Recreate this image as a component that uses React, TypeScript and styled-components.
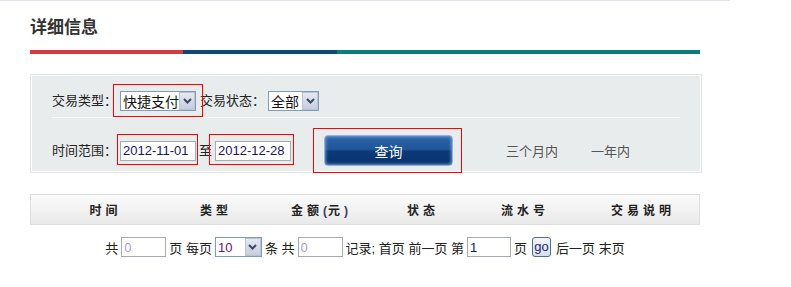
import React from "react";
import styled, { createGlobalStyle } from "styled-components";

const GlobalStyle = createGlobalStyle`
  html, body { margin: 0; padding: 0; background: #fff; }
  body {
    font-family: "Liberation Sans", "Noto Sans CJK SC", sans-serif;
    font-size: 13px;
    color: #222;
  }
  * { box-sizing: border-box; }
`;

const Page = styled.div`
  width: 791px;
  height: 287px;
  overflow: hidden;
`;

const TopRule = styled.div`
  width: 730px;
  height: 1px;
  background: #dfe4ea;
`;

const Content = styled.div`
  margin-left: 30px;
  width: 672px;
`;

const Title = styled.h2`
  margin: 0;
  padding-top: 18px;
  height: 49px;
  font-size: 17px;
  line-height: 17px;
  font-weight: bold;
  color: #333;
`;

const ColorBar = styled.div`
  display: flex;
  width: 670px;
  height: 4px;
`;

const Segment = styled.div<{ $color: string; $w: number }>`
  width: ${(p) => p.$w}px;
  background: ${(p) => p.$color};
`;

const Panel = styled.div`
  margin-top: 20px;
  width: 672px;
  border: 1px solid #e1e3e4;
  padding: 1px;
  background: #fff;
`;

const PanelInner = styled.div`
  background: #e9eced;
  padding: 0 20px;
`;

const RowOne = styled.div`
  display: flex;
  align-items: center;
  padding: 15px 0 6px;
  border-bottom: 1px solid #fff;
`;

const RowTwo = styled.div`
  display: flex;
  align-items: center;
  padding: 17px 0 5px;
`;

const Label = styled.span<{ $ml?: number; $mr?: number }>`
  font-size: 13px;
  line-height: 20px;
  color: #222;
  white-space: nowrap;
  margin-left: ${(p) => p.$ml ?? 0}px;
  margin-right: ${(p) => p.$mr ?? 0}px;
`;

const QuickLink = styled.span<{ $ml: number }>`
  font-size: 13px;
  color: #555;
  margin-left: ${(p) => p.$ml}px;
  white-space: nowrap;
`;

const Marked = styled.span<{ $t: number; $r: number; $b: number; $l: number; $ml?: number }>`
  position: relative;
  display: inline-flex;
  margin-left: ${(p) => p.$ml ?? 0}px;
  &::after {
    content: "";
    position: absolute;
    top: -${(p) => p.$t}px;
    right: -${(p) => p.$r}px;
    bottom: -${(p) => p.$b}px;
    left: -${(p) => p.$l}px;
    border: 1px solid #ff0000;
    pointer-events: none;
  }
`;

const FakeSelect = styled.div<{ $w: number; $fs: number; $color?: string; $h?: number }>`
  display: inline-flex;
  align-items: stretch;
  width: ${(p) => p.$w}px;
  height: ${(p) => p.$h ?? 20}px;
  border: 1px solid #7f9db9;
  background: #fff;
  font-size: ${(p) => p.$fs}px;
  color: ${(p) => p.$color ?? "#111"};
`;

const SelectText = styled.span`
  flex: 1;
  padding-left: 2px;
  display: flex;
  align-items: center;
  white-space: nowrap;
  overflow: hidden;
`;

const SelectArrow = styled.span`
  width: 16px;
  border: 1px solid #b9c2d6;
  background: linear-gradient(#e4e8f1, #c7cddd);
  display: flex;
  align-items: center;
  justify-content: center;
`;

const TextInput = styled.input<{ $w: number; $h?: number; $color?: string }>`
  width: ${(p) => p.$w}px;
  height: ${(p) => p.$h ?? 20}px;
  border: 1px solid #a5acb2;
  padding: 0 2px;
  margin: 0;
  font-family: "Liberation Sans", "Noto Sans CJK SC", sans-serif;
  font-size: 13px;
  color: ${(p) => p.$color ?? "#1c1466"};
  background: #fff;
  outline: none;
`;

const QueryButton = styled.button`
  width: 129px;
  height: 31px;
  padding: 0;
  border: 1px solid #8fb1de;
  border-radius: 4px;
  background: linear-gradient(
    #2c63aa 0%,
    #1f5699 46%,
    #0c3a77 52%,
    #08336e 100%
  );
  box-shadow: inset 0 0 3px 1px rgba(140, 175, 225, 0.75);
  color: #fff;
  font-family: "Liberation Sans", "Noto Sans CJK SC", sans-serif;
  font-size: 14px;
  cursor: pointer;
`;

const TableHead = styled.div`
  margin-top: 21px;
  width: 670px;
  height: 31px;
  border: 1px solid #dedede;
  background: linear-gradient(#fbfbfb, #e9e9e9);
  display: grid;
  grid-template-columns: 145px 76px 132px 74px 130px 106px 1fr;
  align-items: center;
`;

const HeadCell = styled.div`
  text-align: center;
  font-size: 12px;
  font-weight: bold;
  letter-spacing: 4px;
  padding-left: 4px;
  color: #222;
  white-space: nowrap;
`;

const Paren = styled.span`
  letter-spacing: 1px;
  color: #3a3a70;
`;

const Pager = styled.div`
  margin-top: 12px;
  width: 670px;
  display: flex;
  justify-content: center;
  align-items: center;
  height: 20px;
  font-size: 13px;
  color: #222;
`;

const PagerText = styled.span`
  white-space: pre;
  margin: 0 3px;
`;

const GoButton = styled.button`
  width: 19px;
  height: 20px;
  padding: 0;
  margin: 0 2px;
  border: 1px solid #4f6d99;
  border-radius: 3px;
  background: linear-gradient(#f2f4f8, #d9dfe8);
  font-family: "Liberation Sans", sans-serif;
  font-size: 13px;
  color: #1b2a7a;
  line-height: 16px;
`;

const Chevron = () => (
  <svg width="9" height="6" viewBox="0 0 9 6">
    <path d="M1 1 L4.5 4.5 L8 1" fill="none" stroke="#3d4866" strokeWidth="2" />
  </svg>
);

const Select = ({ w, fs, text, color, h }: { w: number; fs: number; text: string; color?: string; h?: number }) => (
  <FakeSelect $w={w} $fs={fs} $color={color} $h={h}>
    <SelectText>{text}</SelectText>
    <SelectArrow>
      <Chevron />
    </SelectArrow>
  </FakeSelect>
);

export default function App() {
  return (
    <Page>
      <GlobalStyle />
      <TopRule />
      <Content>
        <Title>详细信息</Title>
        <ColorBar>
          <Segment $color="#da393f" $w={153} />
          <Segment $color="#0b497d" $w={154} />
          <Segment $color="#097c7d" $w={363} />
        </ColorBar>

        <Panel>
          <PanelInner>
            <RowOne>
              <Label $mr={3}>交易类型：</Label>
              <Marked $t={7} $r={7} $b={6} $l={7}>
                <Select w={76} fs={14} text="快捷支付" />
              </Marked>
              <Label $ml={4} $mr={3}>交易状态：</Label>
              <Select w={51} fs={14} text="全部" />
            </RowOne>
            <RowTwo>
              <Label $mr={3}>时间范围：</Label>
              <Marked $t={7} $r={2} $b={4} $l={3}>
                <TextInput $w={76} defaultValue="2012-11-01" readOnly />
              </Marked>
              <Label $ml={3} $mr={3}>至</Label>
              <Marked $t={7} $r={3} $b={4} $l={6}>
                <TextInput $w={76} defaultValue="2012-12-28" readOnly />
              </Marked>
              <Marked $t={7} $r={9} $b={7} $l={11} $ml={33}>
                <QueryButton>查询</QueryButton>
              </Marked>
              <QuickLink $ml={53}>三个月内</QuickLink>
              <QuickLink $ml={33}>一年内</QuickLink>
            </RowTwo>
          </PanelInner>
        </Panel>

        <TableHead>
          <HeadCell>时间</HeadCell>
          <HeadCell>类型</HeadCell>
          <HeadCell>
            金额<Paren>(</Paren>元<Paren>)</Paren>
          </HeadCell>
          <HeadCell>状态</HeadCell>
          <HeadCell>流水号</HeadCell>
          <HeadCell>交易说明</HeadCell>
        </TableHead>

        <Pager>
          <PagerText>共</PagerText>
          <TextInput $w={45} defaultValue="0" $color="#a8a4c8" readOnly />
          <PagerText>页 每页</PagerText>
          <Select w={47} fs={13} text="10" color="#6a0f7a" />
          <PagerText>条 共</PagerText>
          <TextInput $w={45} defaultValue="0" $color="#a8a4c8" readOnly />
          <PagerText>记录; 首页 前一页 第</PagerText>
          <TextInput $w={44} defaultValue="1" readOnly />
          <PagerText>页</PagerText>
          <GoButton>go</GoButton>
          <PagerText>后一页 末页</PagerText>
        </Pager>
      </Content>
    </Page>
  );
}
